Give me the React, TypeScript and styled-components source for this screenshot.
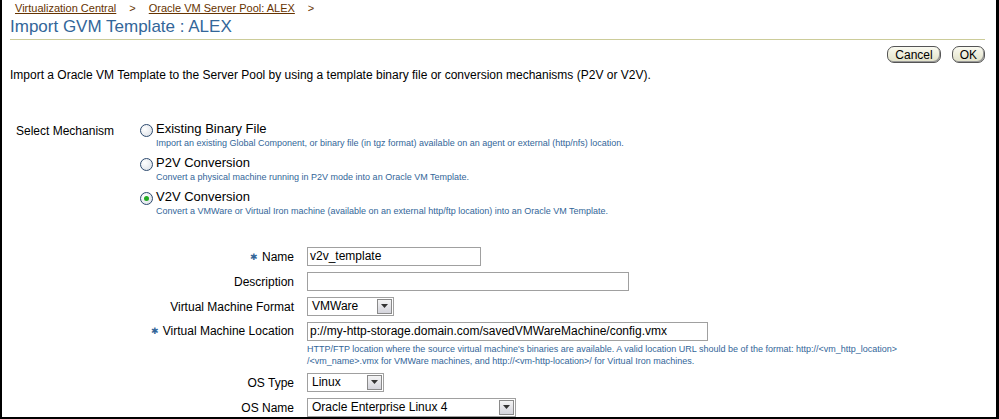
import React from 'react';
import styled, { createGlobalStyle } from 'styled-components';

const Global = createGlobalStyle`
  body { margin: 0; background: #fff; font-family: Tahoma, "Liberation Sans", Arial, sans-serif; }
`;

const Frame = styled.div`
  box-sizing: border-box;
  width: 999px;
  height: 419px;
  border-left: 2px solid #000;
  border-right: 3px solid #000;
  border-bottom: 2px solid #000;
  overflow: hidden;
  padding: 0 11px 0 8px;
  font-size: 12px;
`;

const Crumbs = styled.div`
  display: flex;
  gap: 13px;
  padding: 2px 0 0 5px;
  font-size: 11px;
  color: #663300;
  height: 14px;
  a { color: #663300; text-decoration: underline; }
`;

const Title = styled.h1`
  margin: 0;
  font-size: 17px;
  font-weight: normal;
  color: #336699;
  border-bottom: 1px solid #cccc99;
  padding: 1px 0 2px 0;
  line-height: 20px;
`;

const Buttons = styled.div`
  display: flex;
  justify-content: flex-end;
  gap: 11px;
  margin-top: 6px;
`;

const Btn = styled.button`
  font: inherit;
  font-size: 12px;
  height: 17px;
  padding: 0 7px;
  border: 1px solid #555;
  border-radius: 7px;
  background: linear-gradient(#fafaf0, #e1e1c8);
  box-shadow: inset -1px -1px 0 #999;
  color: #000;
  line-height: 14px;
`;

const Intro = styled.p`
  margin: 5px 0 0;
  line-height: 14px;
`;

const Mech = styled.div`
  display: grid;
  grid-template-columns: 124px 1fr;
  margin-top: 40px;
  padding-left: 6px;
`;

const MechLabel = styled.div`
  padding-top: 2px;
`;

const Options = styled.div`
  display: flex;
  flex-direction: column;
  gap: 7px;
`;

const Option = styled.div`
  display: grid;
  grid-template-columns: 16px 1fr;
  line-height: 14px;
`;

const Radio = styled.span<{ $on?: boolean }>`
  width: 11px;
  height: 11px;
  margin-top: 2px;
  border-radius: 50%;
  border: 1px solid #2d4a6e;
  background: radial-gradient(circle at 35% 35%, #fff, #d8dde4);
  position: relative;
  &::after {
    content: '';
    display: ${(p) => (p.$on ? 'block' : 'none')};
    position: absolute;
    left: 3px;
    top: 3px;
    width: 5px;
    height: 5px;
    border-radius: 50%;
    background: #22aa22;
  }
`;

const OptTitle = styled.div`
  font-size: 13px;
`;

const Help = styled.div`
  font-size: 9px;
  color: #336699;
  line-height: 12px;
  grid-column: 2;
`;

const Form = styled.div`
  display: grid;
  grid-template-columns: 284px 1fr;
  column-gap: 13px;
  row-gap: 6px;
  margin-top: 30px;
  align-items: center;
`;

const Label = styled.label<{ $top?: boolean }>`
  text-align: right;
  font-size: 12px;
  align-self: ${(p) => (p.$top ? 'start' : 'center')};
  padding-top: ${(p) => (p.$top ? '2px' : '0')};
`;

const Req = styled.span`
  color: #336699;
  font-size: 9px;
  margin-right: 4px;
  vertical-align: 1px;
`;

const Input = styled.div<{ $w: number }>`
  box-sizing: border-box;
  width: ${(p) => p.$w}px;
  height: 19px;
  border: 1px solid #a0a0a0;
  padding: 0 2px;
  font-size: 12px;
  line-height: 17px;
  white-space: nowrap;
  overflow: hidden;
`;

const Select = styled.div<{ $w: number }>`
  box-sizing: border-box;
  display: flex;
  justify-content: space-between;
  width: ${(p) => p.$w}px;
  height: 19px;
  border: 1px solid #a0a0a0;
  padding-left: 4px;
  font-size: 12px;
  line-height: 17px;
`;

const Arrow = styled.span`
  width: 15px;
  height: 15px;
  margin: 1px;
  border: 1px solid #8a8a8a;
  box-sizing: border-box;
  background: linear-gradient(#f4f4f4, #d4d4dc);
  display: flex;
  align-items: center;
  justify-content: center;
`;

const FieldCol = styled.div`
  display: flex;
  flex-direction: column;
`;

const FieldHelp = styled(Help)`
  margin-top: 2px;
  width: 640px;
`;

const Caret = () => (
  <Arrow>
    <svg width="7" height="5" viewBox="0 0 7 5"><path d="M0 0L3.5 4L7 0Z" fill="#333" /></svg>
  </Arrow>
);

const App = () => (
  <Frame>
    <Global />
    <Crumbs>
      <a>Virtualization Central</a><span>&gt;</span>
      <a>Oracle VM Server Pool: ALEX</a><span>&gt;</span>
    </Crumbs>
    <Title>Import GVM Template : ALEX</Title>
    <Buttons>
      <Btn>Cancel</Btn>
      <Btn>OK</Btn>
    </Buttons>
    <Intro>
      Import a Oracle VM Template to the Server Pool by using a template binary file or conversion mechanisms (P2V or V2V).
    </Intro>
    <Mech>
      <MechLabel>Select Mechanism</MechLabel>
      <Options>
        <Option>
          <Radio />
          <OptTitle>Existing Binary File</OptTitle>
          <Help>Import an existing Global Component, or binary file (in tgz format) available on an agent or external (http/nfs) location.</Help>
        </Option>
        <Option>
          <Radio />
          <OptTitle>P2V Conversion</OptTitle>
          <Help>Convert a physical machine running in P2V mode into an Oracle VM Template.</Help>
        </Option>
        <Option>
          <Radio $on />
          <OptTitle>V2V Conversion</OptTitle>
          <Help>Convert a VMWare or Virtual Iron machine (available on an external http/ftp location) into an Oracle VM Template.</Help>
        </Option>
      </Options>
    </Mech>
    <Form>
      <Label><Req>✱</Req>Name</Label>
      <Input $w={174}>v2v_template</Input>
      <Label>Description</Label>
      <Input $w={322} />
      <Label>Virtual Machine Format</Label>
      <Select $w={87}>VMWare<Caret /></Select>
      <Label $top><Req>✱</Req>Virtual Machine Location</Label>
      <FieldCol>
        <Input $w={401}>p://my-http-storage.domain.com/savedVMWareMachine/config.vmx</Input>
        <FieldHelp>
          HTTP/FTP location where the source virtual machine's binaries are available. A valid location URL should be of the format: http://&lt;vm_http_location&gt;
          <br />
          /&lt;vm_name&gt;.vmx for VMWare machines, and http://&lt;vm-http-location&gt;/ for Virtual Iron machines.
        </FieldHelp>
      </FieldCol>
      <Label>OS Type</Label>
      <Select $w={77}>Linux<Caret /></Select>
      <Label>OS Name</Label>
      <Select $w={209}>Oracle Enterprise Linux 4<Caret /></Select>
    </Form>
  </Frame>
);

export default App;
